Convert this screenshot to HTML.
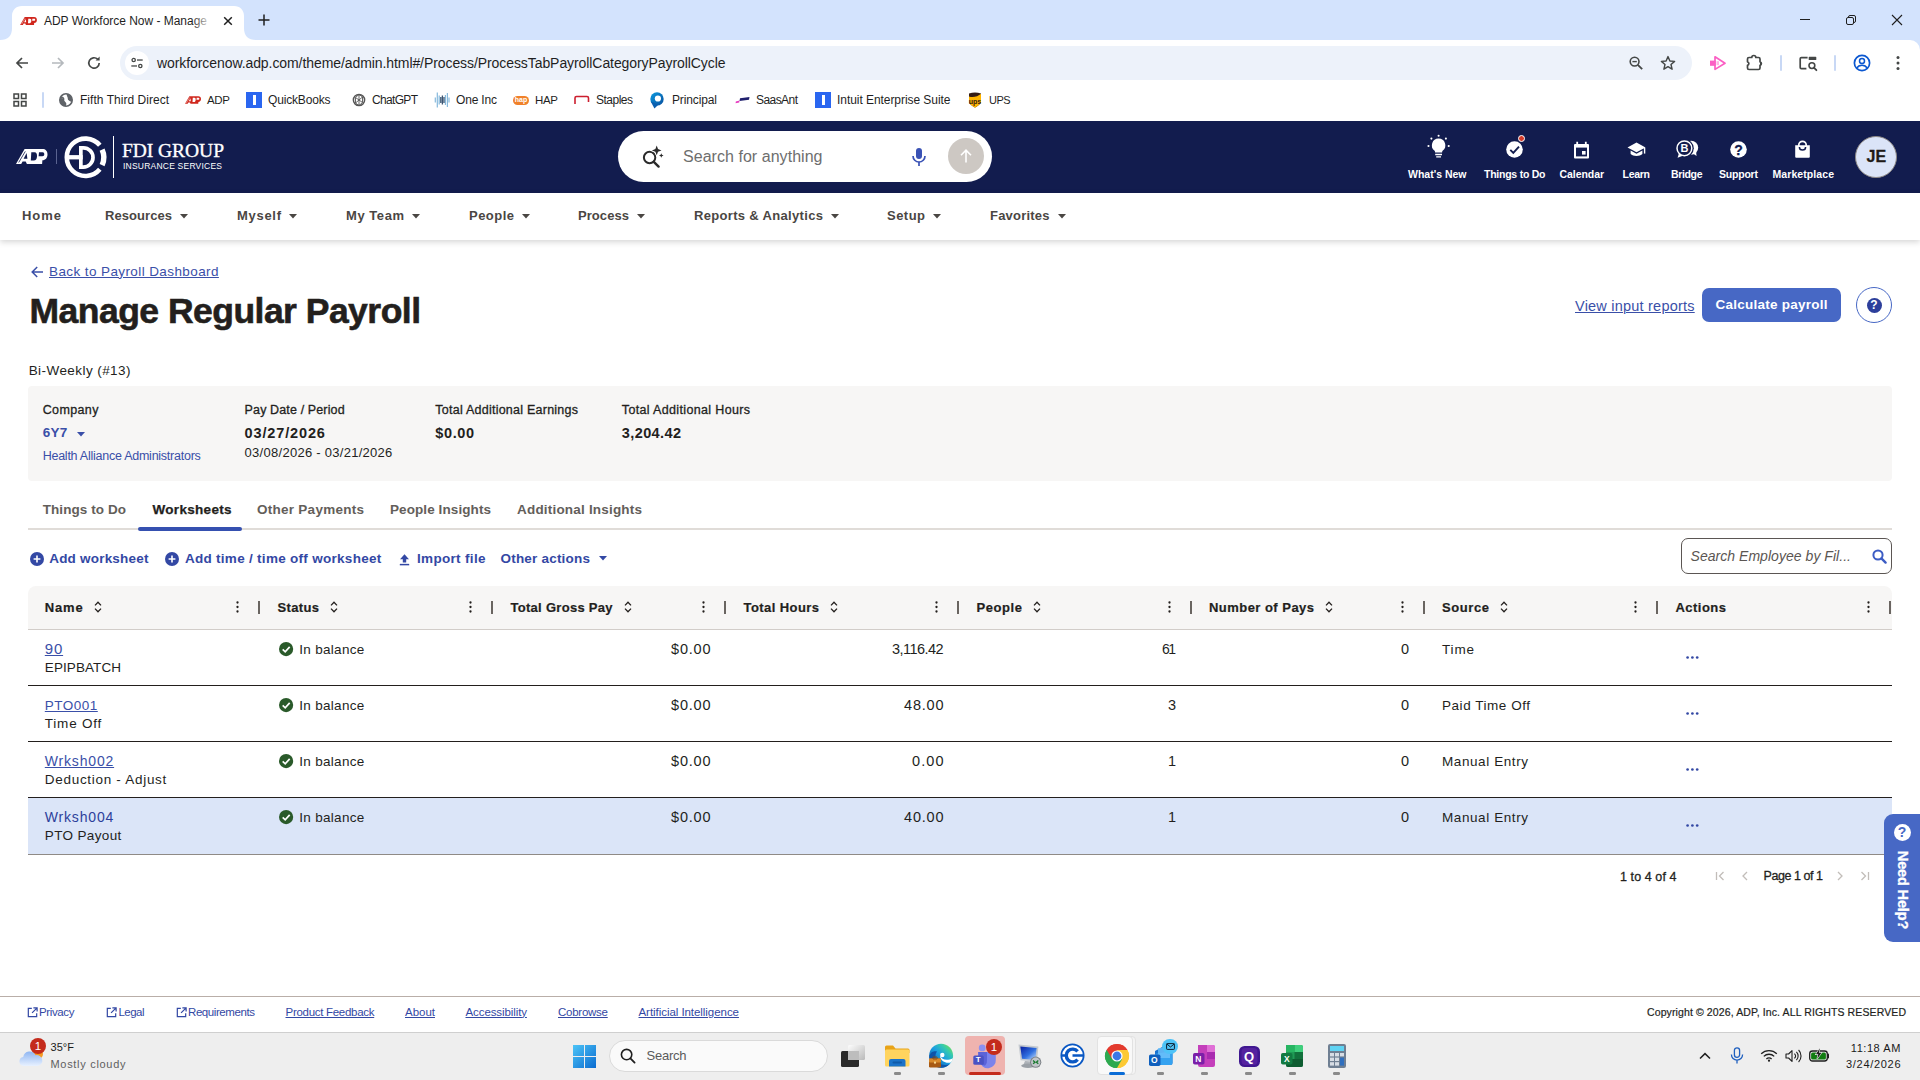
<!DOCTYPE html>
<html lang="en">
<head>
<meta charset="utf-8">
<title>ADP Workforce Now - Manage Regular Payroll</title>
<style>
html,body{margin:0;padding:0;background:#fff;}
body{width:1920px;height:1080px;overflow:hidden;font-family:"Liberation Sans",sans-serif;}
#root{position:relative;width:1920px;height:1080px;overflow:hidden;background:#fff;}
.t{position:absolute;white-space:nowrap;margin:0;padding:0;}
.u span{text-decoration:underline;text-decoration-thickness:1px;text-underline-offset:2px;}
svg{display:block;overflow:visible;}
</style>
</head>
<body>
<div id="root">
<div style="position:absolute;left:0px;top:0px;width:1920px;height:56px;background:#d3e3fd;"></div>
<svg style="position:absolute;left:0;top:0" width="260" height="41" viewBox="0 0 260 41"><path d="M0 40 C8 40 12 36 12 28 L12 16 C12 10 16 6 22 6 L234 6 C240 6 244 10 244 16 L244 28 C244 36 248 40 256 40 L256 41 L0 41 Z" fill="#fff"/></svg>
<div style="position:absolute;left:0px;top:40px;width:1920px;height:46px;background:#fff;border-radius:0 10px 0 0;"></div>
<div style="position:absolute;left:0px;top:86px;width:1920px;height:35px;background:#fff;"></div>
<svg style="position:absolute;left:20px;top:17px;" width="17" height="8" viewBox="0 0 31.5 15"><path d="M0 14.9 L8.6 0 L26.4 0 C29.6 0 31.5 2 31.5 5.4 C31.5 8.8 29.4 11.2 26.4 11.2 L26.1 14.9 L10.9 14.9 L9.7 12.4 L6.6 12.4 L5.2 14.9 Z" fill="#d0271d"/><path d="M10.6 3.9 L11.4 9.8 L7.6 9.8 Z M15.3 3.3 H18.5 C20.5 3.3 21.2 5 21 7.4 C20.8 9.8 19.8 11.5 17.8 11.5 H14.8 Z M23 3.2 H26.6 C27.8 3.2 28.3 4 28.3 5.2 C28.3 6.4 27.6 7.2 26.4 7.2 H22.6 Z" fill="#fff"/><path d="M2.7 13.5 L9.3 2.4" stroke="#fff" stroke-width=".8"/></svg>
<span class="t" style="left:44px;top:12.9px;font-size:12px;line-height:17px;font-weight:400;color:#1f1f1f;letter-spacing:-0.025px;"><span>ADP Workforce Now - Manage</span></span>
<div style="position:absolute;left:192px;top:10px;width:20px;height:22px;background:linear-gradient(90deg,rgba(255,255,255,0),#fff);"></div>
<svg style="position:absolute;left:222px;top:15px;" width="12" height="12" viewBox="0 0 12 12"><path d="M2.2 2.2 L9.8 9.8 M9.8 2.2 L2.2 9.8" stroke="#1f1f1f" stroke-width="1.5" fill="none"/></svg>
<svg style="position:absolute;left:257px;top:13px;" width="14" height="14" viewBox="0 0 14 14"><path d="M7 1.5 V12.5 M1.5 7 H12.5" stroke="#1f1f1f" stroke-width="1.5" fill="none"/></svg>
<svg style="position:absolute;left:1799px;top:13px;" width="12" height="12" viewBox="0 0 12 12"><path d="M1 6.5 H11" stroke="#1f1f1f" stroke-width="1" fill="none"/></svg>
<svg style="position:absolute;left:1845px;top:14.3px;" width="12" height="12" viewBox="0 0 12 12"><rect x="1.5" y="3.5" width="7" height="7" rx="1.5" stroke="#1f1f1f" fill="none"/><path d="M3.5 3.5 V3 A1.5 1.5 0 0 1 5 1.5 H9 A1.5 1.5 0 0 1 10.5 3 V7 A1.5 1.5 0 0 1 9 8.5 H8.5" stroke="#1f1f1f" fill="none"/></svg>
<svg style="position:absolute;left:1891px;top:14px;" width="12" height="12" viewBox="0 0 12 12"><path d="M1 1 L11 11 M11 1 L1 11" stroke="#1f1f1f" stroke-width="1.1" fill="none"/></svg>
<svg style="position:absolute;left:14px;top:55px;" width="16" height="16" viewBox="0 0 16 16"><path d="M14 8 H3 M8 3 L3 8 L8 13" stroke="#444746" stroke-width="1.7" fill="none"/></svg>
<svg style="position:absolute;left:50px;top:55px;" width="16" height="16" viewBox="0 0 16 16"><path d="M2 8 H13 M8 3 L13 8 L8 13" stroke="#b5b9bd" stroke-width="1.7" fill="none"/></svg>
<svg style="position:absolute;left:86px;top:55px;" width="16" height="16" viewBox="0 0 16 16"><path d="M13.2 8 A5.2 5.2 0 1 1 11.6 4.2" stroke="#444746" stroke-width="1.7" fill="none"/><path d="M13.6 1.6 V5.6 H9.6 Z" fill="#444746"/></svg>
<div style="position:absolute;left:120px;top:46px;width:1572px;height:34px;background:#edf2fa;border-radius:17px;"></div>
<div style="position:absolute;left:125px;top:51px;width:24px;height:24px;background:#fff;border-radius:12px;"></div>
<svg style="position:absolute;left:130px;top:56px;" width="14" height="14" viewBox="0 0 16 16"><circle cx="4.2" cy="4.6" r="1.9" stroke="#444746" stroke-width="1.5" fill="none"/><path d="M8 4.6 H14.5" stroke="#444746" stroke-width="1.5"/><circle cx="11.8" cy="11.4" r="1.9" stroke="#444746" stroke-width="1.5" fill="none"/><path d="M1.5 11.4 H8" stroke="#444746" stroke-width="1.5"/></svg>
<span class="t" style="left:157px;top:53.3px;font-size:14px;line-height:20px;font-weight:400;color:#1f1f1f;letter-spacing:-0.079px;"><span>workforcenow.adp.com/theme/admin.html#/Process/ProcessTabPayrollCategoryPayrollCycle</span></span>
<svg style="position:absolute;left:1628px;top:55px;" width="16" height="16" viewBox="0 0 16 16"><circle cx="6.6" cy="6.6" r="4.4" stroke="#444746" stroke-width="1.6" fill="none"/><path d="M9.8 9.8 L14.2 14.2" stroke="#444746" stroke-width="1.8"/><path d="M4.4 6.6 H8.8" stroke="#444746" stroke-width="1.4"/></svg>
<svg style="position:absolute;left:1660px;top:55px;" width="16" height="16" viewBox="0 0 16 16"><path d="M8 1.6 L9.9 6 L14.6 6.4 L11 9.5 L12.1 14.2 L8 11.7 L3.9 14.2 L5 9.5 L1.4 6.4 L6.1 6 Z" stroke="#444746" stroke-width="1.4" fill="none" stroke-linejoin="round"/></svg>
<svg style="position:absolute;left:1708px;top:54px;" width="19" height="18" viewBox="0 0 19 18"><path d="M2 6.6 H7.6 V11.8 H2 Z" fill="#fb5fc4"/><path d="M7 2.8 L17 9.2 L7 15.4 Z" fill="none" stroke="#fb5fc4" stroke-width="1.7" stroke-linejoin="round"/><path d="M8.5 7.2 H11 V11.2 H8.5 Z" fill="#fcb6e2"/></svg>
<svg style="position:absolute;left:1745px;top:53px;" width="20" height="20" viewBox="0 0 20 20"><path d="M2.5 6 A1.5 1.5 0 0 1 4 4.5 H6.8 A2 2 0 0 1 10.8 4.5 H13.5 A1.5 1.5 0 0 1 15 6 V8.8 A1.8 1.8 0 0 1 15 12.3 V15 A1.5 1.5 0 0 1 13.5 16.5 H4 A1.5 1.5 0 0 1 2.5 15 V12.3 A1.8 1.8 0 0 0 2.5 8.8 Z" stroke="#444746" stroke-width="1.7" fill="none" stroke-linejoin="round"/><path d="M15 8.8 A1.8 1.8 0 0 1 15 12.3 Z" fill="#444746"/></svg>
<div style="position:absolute;left:1780px;top:55px;width:2px;height:16px;background:#c8d8f5;border-radius:1px;"></div>
<svg style="position:absolute;left:1797px;top:54px;" width="20" height="18" viewBox="0 0 20 18"><path d="M10.6 3.6 H4.4 A1.2 1.2 0 0 0 3.2 4.8 V13.4 A1.2 1.2 0 0 0 4.4 14.6 H9.4" stroke="#444746" stroke-width="1.7" fill="none"/><rect x="11.7" y="2.8" width="7.6" height="3.3" rx=".6" fill="#444746"/><circle cx="14.9" cy="11.6" r="2.9" stroke="#444746" stroke-width="1.6" fill="none"/><path d="M17.1 13.8 L19.4 16.2" stroke="#444746" stroke-width="1.8" stroke-linecap="round"/></svg>
<div style="position:absolute;left:1834px;top:55px;width:2px;height:16px;background:#c8d8f5;border-radius:1px;"></div>
<svg style="position:absolute;left:1853px;top:54px;" width="18" height="18" viewBox="0 0 18 18"><circle cx="9" cy="9" r="7.6" stroke="#0b57d0" stroke-width="1.7" fill="none"/><circle cx="9" cy="7" r="2.5" stroke="#0b57d0" stroke-width="1.5" fill="none"/><path d="M3.8 14.2 C5 11.8 7 11.2 9 11.2 C11 11.2 13 11.8 14.2 14.2" stroke="#0b57d0" stroke-width="1.5" fill="none"/></svg>
<svg style="position:absolute;left:1895px;top:55px;" width="6" height="16" viewBox="0 0 6 16"><circle cx="3" cy="2.5" r="1.5" fill="#444746"/><circle cx="3" cy="8" r="1.5" fill="#444746"/><circle cx="3" cy="13.5" r="1.5" fill="#444746"/></svg>
<svg style="position:absolute;left:13px;top:93px;" width="14" height="14" viewBox="0 0 14 14"><path d="M1 1 H5.5 V5.5 H1 Z M8.5 1 H13 V5.5 H8.5 Z M1 8.5 H5.5 V13 H1 Z M8.5 8.5 H13 V13 H8.5 Z" stroke="#444746" stroke-width="1.5" fill="none"/></svg>
<div style="position:absolute;left:42px;top:92px;width:2px;height:16px;background:#c8d8f5;border-radius:1px;"></div>
<svg style="position:absolute;left:59px;top:93px;" width="14" height="14" viewBox="0 0 14 14"><circle cx="7" cy="7" r="6.2" stroke="#5f6368" stroke-width="1.6" fill="none"/><path d="M2 4.5 C4 4 5 5.5 4.5 7 C4 8.5 6 9 6.5 10.5 C6.8 11.6 6 12.5 6 13 M8.5 1 C8 3 10 3.5 9.5 5.5 C9.2 7 11.5 7 12.8 8.5" stroke="#5f6368" stroke-width="1.6" fill="none"/><path d="M1.2 5 C3.5 4.5 5 6 4.5 7.5 C4.2 8.6 6 9 6.4 10.6 L6 13.2 A6.2 6.2 0 0 1 1.2 5 Z" fill="#5f6368"/><path d="M8.3 .9 C8 3 10 3.6 9.6 5.4 C9.3 6.8 11.5 7 13 8.4 A6.2 6.2 0 0 0 8.3 .9 Z" fill="#5f6368"/></svg>
<span class="t" style="left:80px;top:91.5px;font-size:12px;line-height:17px;font-weight:400;color:#1f1f1f;letter-spacing:0.031px;"><span>Fifth Third Direct</span></span>
<svg style="position:absolute;left:185px;top:96px;" width="16" height="8" viewBox="0 0 31.5 15"><path d="M0 14.9 L8.6 0 L26.4 0 C29.6 0 31.5 2 31.5 5.4 C31.5 8.8 29.4 11.2 26.4 11.2 L26.1 14.9 L10.9 14.9 L9.7 12.4 L6.6 12.4 L5.2 14.9 Z" fill="#d0271d"/><path d="M10.6 3.9 L11.4 9.8 L7.6 9.8 Z M15.3 3.3 H18.5 C20.5 3.3 21.2 5 21 7.4 C20.8 9.8 19.8 11.5 17.8 11.5 H14.8 Z M23 3.2 H26.6 C27.8 3.2 28.3 4 28.3 5.2 C28.3 6.4 27.6 7.2 26.4 7.2 H22.6 Z" fill="#fff"/><path d="M2.7 13.5 L9.3 2.4" stroke="#fff" stroke-width=".8"/></svg>
<span class="t" style="left:207px;top:92.2px;font-size:11.5px;line-height:16px;font-weight:400;color:#1f1f1f;letter-spacing:-0.328px;"><span>ADP</span></span>
<div style="position:absolute;left:246px;top:92px;width:16px;height:16px;background:#2a66f0;"></div>
<div style="position:absolute;left:252.5px;top:95px;width:3px;height:10px;background:#fff;"></div>
<span class="t" style="left:268px;top:91.5px;font-size:12px;line-height:17px;font-weight:400;color:#1f1f1f;letter-spacing:-0.170px;"><span>QuickBooks</span></span>
<svg style="position:absolute;left:352px;top:93px;" width="14" height="14" viewBox="0 0 14 14"><circle cx="7" cy="7" r="5.6" stroke="#555" stroke-width="1.5" fill="none"/><path d="M7 1.4 L10.5 4 V9.5 L7 12.6 L3.5 10 V4.5 Z M3.5 4.5 L10.5 9.5 M10.5 4 L3.5 10 M7 1.4 V12.6" stroke="#555" stroke-width=".9" fill="none"/></svg>
<span class="t" style="left:372px;top:91.5px;font-size:12px;line-height:17px;font-weight:400;color:#1f1f1f;letter-spacing:-0.669px;"><span>ChatGPT</span></span>
<svg style="position:absolute;left:434px;top:92px;" width="16" height="16" viewBox="0 0 16 16"><path d="M1.3 5.5 V10.5 M3.3 .5 V15.5 M5.2 3.5 V12.5 M11.4 3 V13 M13.4 1 V15 M15 5.5 V10.5" stroke="#86b9dc" stroke-width="1.2" fill="none"/><path d="M6.8 5 V11 M8.4 3.5 V12.5 M10 5 V11" stroke="#3b5573" stroke-width="1.3" fill="none"/></svg>
<span class="t" style="left:456px;top:91.5px;font-size:12px;line-height:17px;font-weight:400;color:#1f1f1f;letter-spacing:-0.172px;"><span>One Inc</span></span>
<div style="position:absolute;left:513px;top:95.5px;width:16px;height:9px;background:#f0812a;border-radius:4.5px;"></div>
<span class="t" style="left:221px;width:600px;text-align:center;top:94.8px;font-size:7px;line-height:10px;font-weight:700;color:#fff;"><span>hap</span></span>
<span class="t" style="left:535px;top:92.2px;font-size:11.5px;line-height:16px;font-weight:400;color:#1f1f1f;letter-spacing:-0.328px;"><span>HAP</span></span>
<svg style="position:absolute;left:574px;top:93px;" width="16" height="14" viewBox="0 0 16 14"><path d="M1 11 V5 A1.5 1.5 0 0 1 2.5 3.5 H13 A1.5 1.5 0 0 1 14.5 5 V9" stroke="#cc1f2f" stroke-width="1.6" fill="none"/></svg>
<span class="t" style="left:596px;top:91.5px;font-size:12px;line-height:17px;font-weight:400;color:#1f1f1f;letter-spacing:-0.505px;"><span>Staples</span></span>
<svg style="position:absolute;left:650px;top:91.5px;" width="14" height="17" viewBox="0 0 14 17"><defs><linearGradient id="pr" x1="0" y1="0" x2="1" y2="1"><stop offset="0" stop-color="#0a9be0"/><stop offset="1" stop-color="#0a4f9e"/></linearGradient></defs><circle cx="7" cy="6.9" r="6.7" fill="url(#pr)"/><path d="M.8 9.4 L4.4 16.4 L8.6 12.6 Z" fill="#0a5fb0"/><circle cx="7.9" cy="6.5" r="3.1" fill="#fff"/></svg>
<span class="t" style="left:672px;top:91.5px;font-size:12px;line-height:17px;font-weight:400;color:#1f1f1f;letter-spacing:-0.129px;"><span>Principal</span></span>
<svg style="position:absolute;left:735px;top:96px;" width="16" height="8" viewBox="0 0 16 8"><path d="M5 2.2 L14.5 1 L14 3.8 L4.5 5 Z" fill="#20206e"/><path d="M.8 5.4 L4.6 4.6 L4.2 6.6 L.6 7.2 Z" fill="#e83cc0"/></svg>
<span class="t" style="left:756px;top:91.5px;font-size:12px;line-height:17px;font-weight:400;color:#1f1f1f;letter-spacing:-0.562px;"><span>SaasAnt</span></span>
<div style="position:absolute;left:815px;top:92px;width:16px;height:16px;background:#2a66f0;"></div>
<div style="position:absolute;left:821.5px;top:95px;width:3px;height:10px;background:#fff;"></div>
<span class="t" style="left:837px;top:91.5px;font-size:12px;line-height:17px;font-weight:400;color:#1f1f1f;letter-spacing:-0.056px;"><span>Intuit Enterprise Suite</span></span>
<svg style="position:absolute;left:968px;top:92px;" width="14" height="16" viewBox="0 0 14 16"><path d="M1 1.5 C5 .2 9 .2 13 1.5 V9 C13 12 10 14 7 15.5 C4 14 1 12 1 9 Z" fill="#351c15"/><path d="M1 4.5 C5 6 10 4.5 13 1.8 V9 C13 12 10 14 7 15.5 C4 14 1 12 1 9 Z" fill="#ffb500"/></svg>
<span class="t" style="left:675px;width:600px;text-align:center;top:96.5px;font-size:7px;line-height:10px;font-weight:700;color:#351c15;"><span>ups</span></span>
<span class="t" style="left:989px;top:92.9px;font-size:11px;line-height:15px;font-weight:400;color:#1f1f1f;letter-spacing:-0.562px;"><span>UPS</span></span>
<div style="position:absolute;left:0px;top:121px;width:1920px;height:72px;background:#121c4e;"></div>
<svg style="position:absolute;left:15.7px;top:148.9px;" width="31.5" height="15" viewBox="0 0 31.5 15"><path d="M0 14.9 L8.6 0 L26.4 0 C29.6 0 31.5 2 31.5 5.4 C31.5 8.8 29.4 11.2 26.4 11.2 L26.1 14.9 L10.9 14.9 L9.7 12.4 L6.6 12.4 L5.2 14.9 Z" fill="#fff"/><path d="M10.6 3.9 L11.4 9.8 L7.6 9.8 Z M15.3 3.3 H18.5 C20.5 3.3 21.2 5 21 7.4 C20.8 9.8 19.8 11.5 17.8 11.5 H14.8 Z M23 3.2 H26.6 C27.8 3.2 28.3 4 28.3 5.2 C28.3 6.4 27.6 7.2 26.4 7.2 H22.6 Z" fill="#121c4e"/><path d="M2.7 13.5 L9.3 2.4" stroke="#121c4e" stroke-width=".8"/></svg>
<div style="position:absolute;left:56px;top:149px;width:1px;height:15px;background:#5a6390;"></div>
<svg style="position:absolute;left:64px;top:135.5px;" width="43" height="43" viewBox="0 0 43 43"><path d="M35.82 9.28 A18.7 18.7 0 1 0 35.82 33.32" stroke="#fff" stroke-width="4.6" fill="none"/><path d="M38.09 13.57 A18.3 18.3 0 0 1 38.09 29.03" stroke="#fff" stroke-width="5.4" fill="none"/><path d="M4.8 19.1 H18.7 V23.4 H4.8 Z" fill="#fff"/><path fill-rule="evenodd" d="M15 10 H19.4 A11.45 11.45 0 0 1 19.4 32.9 H15 Z M18.7 13.7 H19.4 A7.75 7.75 0 0 1 19.4 29.2 H18.7 Z" fill="#fff"/></svg>
<div style="position:absolute;left:113px;top:136px;width:1px;height:42px;background:#fff;"></div>
<span class="t" style="left:122px;top:139.0px;font-size:19.5px;line-height:24px;font-weight:400;color:#fff;letter-spacing:-0.051px;font-family:'Liberation Serif', serif;-webkit-text-stroke:.35px #fff;"><span>FDI GROUP</span></span>
<span class="t" style="left:123px;top:161.4px;font-size:8.5px;line-height:10px;font-weight:400;color:#fff;letter-spacing:0.220px;"><span>INSURANCE SERVICES</span></span>
<div style="position:absolute;left:618px;top:131px;width:374px;height:51px;background:#fff;border-radius:25.5px;"></div>
<svg style="position:absolute;left:641px;top:145px;" width="24" height="24" viewBox="0 0 24 24"><circle cx="8.6" cy="12.5" r="5.7" stroke="#2b2b2b" stroke-width="2" fill="none"/><path d="M12.8 16.8 L17.6 21.6" stroke="#2b2b2b" stroke-width="2.4" stroke-linecap="round"/><path d="M15.7 .6 L17 4.1 L20.5 5.4 L17 6.7 L15.7 10.2 L14.4 6.7 L10.9 5.4 L14.4 4.1 Z" fill="#2b2b2b" stroke="#fff" stroke-width="1.6" paint-order="stroke"/><path d="M20.3 8.2 L20.95 9.85 L22.6 10.5 L20.95 11.15 L20.3 12.8 L19.65 11.15 L18 10.5 L19.65 9.85 Z" fill="#2b2b2b"/></svg>
<span class="t" style="left:683px;top:146.0px;font-size:16px;line-height:22px;font-weight:400;color:#6e6e6e;letter-spacing:0.042px;"><span>Search for anything</span></span>
<svg style="position:absolute;left:911px;top:147px;" width="16" height="20" viewBox="0 0 16 20"><rect x="5" y="1" width="6" height="11" rx="3" fill="#3a52b5"/><path d="M2 9 A6 6 0 0 0 14 9" stroke="#3a52b5" stroke-width="1.7" fill="none"/><path d="M8 15 V19" stroke="#3a52b5" stroke-width="1.7"/></svg>
<div style="position:absolute;left:948px;top:138px;width:36px;height:36px;background:#cdc8c3;border-radius:18px;"></div>
<svg style="position:absolute;left:957px;top:147px;" width="18" height="18" viewBox="0 0 18 18"><path d="M9 15.5 V3.5 M4 8.2 L9 3.2 L14 8.2" stroke="#fff" stroke-width="1.6" fill="none"/></svg>
<svg style="position:absolute;left:1426px;top:134px;" width="25" height="26" viewBox="0 0 25 26"><path d="M12.6 4.6 A6.7 6.7 0 0 0 8.6 16.7 C9 17.2 9.1 17.8 9.1 18.6 H16.1 C16.1 17.8 16.2 17.2 16.6 16.7 A6.7 6.7 0 0 0 12.6 4.6 Z" fill="#fff"/><path d="M9.2 19.8 H16 V21.3 H9.2 Z M10.2 22.3 H15 V23.6 H10.2 Z" fill="#fff"/><circle cx="12.6" cy="1.8" r="1.05" fill="#fff"/><circle cx="5.4" cy="4.6" r="1.05" fill="#fff"/><circle cx="19.9" cy="4.6" r="1.05" fill="#fff"/><circle cx="2.5" cy="12" r="1.05" fill="#fff"/><circle cx="22.7" cy="12" r="1.05" fill="#fff"/></svg>
<span class="t" style="left:1408px;top:166.7px;font-size:10.5px;line-height:15px;font-weight:700;color:#fff;letter-spacing:-0.002px;"><span>What&#x27;s New</span></span>
<svg style="position:absolute;left:1506px;top:141px;" width="17" height="17" viewBox="0 0 17 17"><circle cx="8.5" cy="8.5" r="8.3" fill="#fff"/><path d="M4.3 8.8 L7.3 11.8 L13 5.6" stroke="#121c4e" stroke-width="1.9" fill="none"/></svg>
<div style="position:absolute;left:1518px;top:135px;width:7px;height:7px;background:#d43b2a;border-radius:4px;border:1px solid #fff;box-sizing:border-box;"></div>
<span class="t" style="left:1484px;top:166.7px;font-size:10.5px;line-height:15px;font-weight:700;color:#fff;letter-spacing:-0.241px;"><span>Things to Do</span></span>
<svg style="position:absolute;left:1573px;top:141px;" width="17" height="18" viewBox="0 0 17 18"><path d="M2 3 H15 A1 1 0 0 1 16 4 V16.5 A1 1 0 0 1 15 17.5 H2 A1 1 0 0 1 1 16.5 V4 A1 1 0 0 1 2 3 Z" fill="#fff"/><path d="M4.2 .8 V4 M12.8 .8 V4" stroke="#fff" stroke-width="1.8"/><rect x="3" y="6.6" width="11" height="8.8" fill="#121c4e"/><rect x="9" y="10" width="3.6" height="3.6" fill="#fff"/></svg>
<span class="t" style="left:1559.5px;top:166.7px;font-size:10.5px;line-height:15px;font-weight:700;color:#fff;letter-spacing:-0.062px;"><span>Calendar</span></span>
<svg style="position:absolute;left:1627px;top:142px;" width="19" height="16" viewBox="0 0 19 16"><path d="M9.5 .5 L18.5 5.4 L9.5 10.3 L.5 5.4 Z" fill="#fff"/><path d="M3.6 8.6 V12 C6 14.6 13 14.6 15.4 12 V8.6 L9.5 11.8 Z" fill="#fff"/><path d="M17.6 5.8 V11.6" stroke="#fff" stroke-width="1.4"/></svg>
<span class="t" style="left:1622.5px;top:166.7px;font-size:10.5px;line-height:15px;font-weight:700;color:#fff;letter-spacing:-0.273px;"><span>Learn</span></span>
<svg style="position:absolute;left:1675px;top:139px;" width="24" height="20" viewBox="0 0 24 20"><circle cx="16.2" cy="8.8" r="7" fill="#fff"/><path d="M18 14.5 L21.6 17 L21 12.4 Z" fill="#fff"/><circle cx="9.4" cy="9.3" r="9.4" fill="#121c4e"/><circle cx="9.4" cy="9.3" r="7.4" fill="#121c4e" stroke="#fff" stroke-width="1.5"/><path d="M3.9 14.6 L2.6 18.8 L7.8 16.8 Z" fill="#fff"/></svg>
<span class="t" style="left:1384.4px;width:600px;text-align:center;top:142.4px;font-size:11px;line-height:12px;font-weight:700;color:#fff;"><span>B</span></span>
<span class="t" style="left:1671px;top:166.7px;font-size:10.5px;line-height:15px;font-weight:700;color:#fff;letter-spacing:-0.353px;"><span>Bridge</span></span>
<svg style="position:absolute;left:1730px;top:141px;" width="17" height="17" viewBox="0 0 17 17"><circle cx="8.5" cy="8.5" r="8.3" fill="#fff"/></svg>
<span class="t" style="left:1438.6px;width:600px;text-align:center;top:143.0px;font-size:14px;line-height:14px;font-weight:700;color:#121c4e;-webkit-text-stroke:.3px #121c4e;"><span>?</span></span>
<span class="t" style="left:1719px;top:166.7px;font-size:10.5px;line-height:15px;font-weight:700;color:#fff;letter-spacing:-0.208px;"><span>Support</span></span>
<svg style="position:absolute;left:1794px;top:139px;" width="17" height="20" viewBox="0 0 17 20"><path d="M1.2 6.3 H15.8 V17.8 A1 1 0 0 1 14.8 18.8 H2.2 A1 1 0 0 1 1.2 17.8 Z" fill="#fff"/><path d="M4.8 7 V6 A3.7 3.7 0 0 1 12.2 6 V7" stroke="#fff" stroke-width="1.7" fill="none"/><path d="M5.4 8 A3.1 3.1 0 0 0 11.6 8" stroke="#121c4e" stroke-width="1.5" fill="none"/></svg>
<span class="t" style="left:1772.5px;top:166.7px;font-size:10.5px;line-height:15px;font-weight:700;color:#fff;letter-spacing:0.080px;"><span>Marketplace</span></span>
<div style="position:absolute;left:1855px;top:135.5px;width:42px;height:42px;background:#dbe4f8;border-radius:21px;border:1.5px solid #8f8a86;box-sizing:border-box;"></div>
<span class="t" style="left:1576.5px;width:600px;text-align:center;top:145.7px;font-size:16px;line-height:22px;font-weight:700;color:#1f1a17;letter-spacing:.3px;-webkit-text-stroke:.3px #1f1a17;"><span>JE</span></span>
<div style="position:absolute;left:0px;top:193px;width:1920px;height:47px;background:#fff;box-shadow:0 2px 6px rgba(0,0,0,.17);"></div>
<span class="t" style="left:22px;top:207.2px;font-size:13px;line-height:18px;font-weight:700;color:#4a4643;letter-spacing:0.958px;"><span>Home</span></span>
<span class="t" style="left:105px;top:207.2px;font-size:13px;line-height:18px;font-weight:700;color:#4a4643;letter-spacing:0.064px;"><span>Resources</span></span>
<svg style="position:absolute;left:180px;top:214px;" width="8" height="5" viewBox="0 0 8 5"><path d="M0 0 H8 L4 4.6 Z" fill="#4a4643"/></svg>
<span class="t" style="left:237px;top:207.2px;font-size:13px;line-height:18px;font-weight:700;color:#4a4643;letter-spacing:0.706px;"><span>Myself</span></span>
<svg style="position:absolute;left:289px;top:214px;" width="8" height="5" viewBox="0 0 8 5"><path d="M0 0 H8 L4 4.6 Z" fill="#4a4643"/></svg>
<span class="t" style="left:346px;top:207.2px;font-size:13px;line-height:18px;font-weight:700;color:#4a4643;letter-spacing:0.555px;"><span>My Team</span></span>
<svg style="position:absolute;left:412px;top:214px;" width="8" height="5" viewBox="0 0 8 5"><path d="M0 0 H8 L4 4.6 Z" fill="#4a4643"/></svg>
<span class="t" style="left:469px;top:207.2px;font-size:13px;line-height:18px;font-weight:700;color:#4a4643;letter-spacing:0.475px;"><span>People</span></span>
<svg style="position:absolute;left:522px;top:214px;" width="8" height="5" viewBox="0 0 8 5"><path d="M0 0 H8 L4 4.6 Z" fill="#4a4643"/></svg>
<span class="t" style="left:578px;top:207.2px;font-size:13px;line-height:18px;font-weight:700;color:#4a4643;letter-spacing:0.068px;"><span>Process</span></span>
<svg style="position:absolute;left:637px;top:214px;" width="8" height="5" viewBox="0 0 8 5"><path d="M0 0 H8 L4 4.6 Z" fill="#4a4643"/></svg>
<span class="t" style="left:694px;top:207.2px;font-size:13px;line-height:18px;font-weight:700;color:#4a4643;letter-spacing:0.330px;"><span>Reports &amp; Analytics</span></span>
<svg style="position:absolute;left:831px;top:214px;" width="8" height="5" viewBox="0 0 8 5"><path d="M0 0 H8 L4 4.6 Z" fill="#4a4643"/></svg>
<span class="t" style="left:887px;top:207.2px;font-size:13px;line-height:18px;font-weight:700;color:#4a4643;letter-spacing:0.469px;"><span>Setup</span></span>
<svg style="position:absolute;left:933px;top:214px;" width="8" height="5" viewBox="0 0 8 5"><path d="M0 0 H8 L4 4.6 Z" fill="#4a4643"/></svg>
<span class="t" style="left:990px;top:207.2px;font-size:13px;line-height:18px;font-weight:700;color:#4a4643;letter-spacing:0.211px;"><span>Favorites</span></span>
<svg style="position:absolute;left:1057.5px;top:214px;" width="8" height="5" viewBox="0 0 8 5"><path d="M0 0 H8 L4 4.6 Z" fill="#4a4643"/></svg>
<svg style="position:absolute;left:30.5px;top:265.5px;" width="12" height="12" viewBox="0 0 12 12"><path d="M12 6 H1.6 M6.2 1 L1.2 6 L6.2 11" stroke="#3a4fa8" stroke-width="1.5" fill="none"/></svg>
<span class="t" style="left:49px;top:262.0px;font-size:13.5px;line-height:19px;font-weight:400;color:#3a4fa8;letter-spacing:0.402px;text-decoration:underline;text-decoration-thickness:1px;text-underline-offset:1px;"><span>Back to Payroll Dashboard</span></span>
<span class="t" style="left:29.5px;top:289.2px;font-size:35.5px;line-height:44px;font-weight:700;color:#231f1d;letter-spacing:-0.522px;-webkit-text-stroke:.6px #231f1d;"><span>Manage Regular Payroll</span></span>
<span class="t" style="left:28.7px;top:360.7px;font-size:13.5px;line-height:19px;font-weight:400;color:#231f1d;letter-spacing:0.430px;"><span>Bi-Weekly (#13)</span></span>
<span class="t" style="left:1575px;top:295.6px;font-size:14.5px;line-height:20px;font-weight:400;color:#3a4fa8;letter-spacing:0.218px;text-decoration:underline;text-decoration-thickness:1px;text-underline-offset:1px;"><span>View input reports</span></span>
<div style="position:absolute;left:1702px;top:288px;width:139px;height:34px;background:#4768c5;border-radius:7px;"></div>
<span class="t" style="left:1715.5px;top:295.2px;font-size:13.5px;line-height:19px;font-weight:700;color:#fff;letter-spacing:0.247px;"><span>Calculate payroll</span></span>
<div style="position:absolute;left:1856px;top:287px;width:36px;height:36px;background:#fff;border-radius:18px;border:1px solid #4768c5;box-sizing:border-box;"></div>
<div style="position:absolute;left:1866.5px;top:297.5px;width:15px;height:15px;background:#2d3f9b;border-radius:8px;"></div>
<span class="t" style="left:1574px;width:600px;text-align:center;top:299.2px;font-size:12px;line-height:12px;font-weight:700;color:#fff;"><span>?</span></span>
<div style="position:absolute;left:28px;top:386px;width:1864px;height:95px;background:#f7f6f5;border-radius:4px;"></div>
<span class="t" style="left:42.7px;top:400.8px;font-size:12.5px;line-height:18px;font-weight:400;color:#231f1d;letter-spacing:0.367px;-webkit-text-stroke:.3px currentColor;"><span>Company</span></span>
<span class="t" style="left:42.7px;top:423.3px;font-size:13.5px;line-height:19px;font-weight:700;color:#3a4fa8;letter-spacing:0.334px;"><span>6Y7</span></span>
<svg style="position:absolute;left:76.5px;top:431.5px;" width="8" height="5" viewBox="0 0 8 5"><path d="M0 0 H8 L4 4.6 Z" fill="#3a4fa8"/></svg>
<span class="t" style="left:42.7px;top:446.7px;font-size:12.5px;line-height:18px;font-weight:400;color:#3a4fa8;letter-spacing:-0.250px;"><span>Health Alliance Administrators</span></span>
<span class="t" style="left:244.6px;top:400.8px;font-size:12.5px;line-height:18px;font-weight:400;color:#231f1d;letter-spacing:0.127px;-webkit-text-stroke:.3px currentColor;"><span>Pay Date / Period</span></span>
<span class="t" style="left:244.6px;top:422.5px;font-size:14.5px;line-height:20px;font-weight:700;color:#231f1d;letter-spacing:0.858px;"><span>03/27/2026</span></span>
<span class="t" style="left:244.6px;top:444.3px;font-size:13px;line-height:18px;font-weight:400;color:#231f1d;letter-spacing:0.273px;"><span>03/08/2026 - 03/21/2026</span></span>
<span class="t" style="left:435.3px;top:400.8px;font-size:12.5px;line-height:18px;font-weight:400;color:#231f1d;letter-spacing:0.241px;-webkit-text-stroke:.3px currentColor;"><span>Total Additional Earnings</span></span>
<span class="t" style="left:435.3px;top:422.5px;font-size:14.5px;line-height:20px;font-weight:700;color:#231f1d;letter-spacing:0.601px;"><span>$0.00</span></span>
<span class="t" style="left:621.8px;top:400.8px;font-size:12.5px;line-height:18px;font-weight:400;color:#231f1d;letter-spacing:0.347px;-webkit-text-stroke:.3px currentColor;"><span>Total Additional Hours</span></span>
<span class="t" style="left:621.8px;top:422.5px;font-size:14.5px;line-height:20px;font-weight:700;color:#231f1d;letter-spacing:0.392px;"><span>3,204.42</span></span>
<div style="position:absolute;left:28px;top:528px;width:1864px;height:1.6px;background:#e0dcd8;"></div>
<span class="t" style="left:42.7px;top:500.1px;font-size:13.5px;line-height:19px;font-weight:700;color:#635e5a;letter-spacing:0.074px;"><span>Things to Do</span></span>
<span class="t" style="left:152.5px;top:500.1px;font-size:13.5px;line-height:19px;font-weight:700;color:#231f1d;letter-spacing:0.302px;-webkit-text-stroke:.25px #231f1d;"><span>Worksheets</span></span>
<span class="t" style="left:257px;top:500.1px;font-size:13.5px;line-height:19px;font-weight:700;color:#635e5a;letter-spacing:0.266px;"><span>Other Payments</span></span>
<span class="t" style="left:390px;top:500.1px;font-size:13.5px;line-height:19px;font-weight:700;color:#635e5a;letter-spacing:0.087px;"><span>People Insights</span></span>
<span class="t" style="left:517px;top:500.1px;font-size:13.5px;line-height:19px;font-weight:700;color:#635e5a;letter-spacing:0.194px;"><span>Additional Insights</span></span>
<div style="position:absolute;left:138px;top:527.3px;width:104px;height:3.8px;background:#3550b0;border-radius:2px;"></div>
<svg style="position:absolute;left:29.7px;top:551.7px;" width="14" height="14" viewBox="0 0 14 14"><circle cx="7" cy="7" r="7" fill="#3348a4"/><path d="M7 3.6 V10.4 M3.6 7 H10.4" stroke="#fff" stroke-width="1.6"/></svg>
<span class="t" style="left:49.2px;top:549.1px;font-size:13.5px;line-height:19px;font-weight:700;color:#3348a4;letter-spacing:0.210px;"><span>Add worksheet</span></span>
<svg style="position:absolute;left:164.8px;top:551.7px;" width="14" height="14" viewBox="0 0 14 14"><circle cx="7" cy="7" r="7" fill="#3348a4"/><path d="M7 3.6 V10.4 M3.6 7 H10.4" stroke="#fff" stroke-width="1.6"/></svg>
<span class="t" style="left:184.9px;top:549.1px;font-size:13.5px;line-height:19px;font-weight:700;color:#3348a4;letter-spacing:0.290px;"><span>Add time / time off worksheet</span></span>
<svg style="position:absolute;left:398.8px;top:553.8px;" width="11" height="11.5" viewBox="0 0 11 11.5"><path d="M5.5 .2 L10 5.2 H7.2 V8.4 H3.8 V5.2 H1 Z" fill="#3348a4"/><path d="M.8 10.6 H10.2" stroke="#3348a4" stroke-width="1.5"/></svg>
<span class="t" style="left:417px;top:549.1px;font-size:13.5px;line-height:19px;font-weight:700;color:#3348a4;letter-spacing:0.323px;"><span>Import file</span></span>
<span class="t" style="left:500.5px;top:549.1px;font-size:13.5px;line-height:19px;font-weight:700;color:#3348a4;letter-spacing:0.206px;"><span>Other actions</span></span>
<svg style="position:absolute;left:598.5px;top:556.4px;" width="8" height="5" viewBox="0 0 8 5"><path d="M0 0 H8 L4 4.6 Z" fill="#3348a4"/></svg>
<div style="position:absolute;left:1681px;top:538px;width:211px;height:36px;background:#fff;border-radius:7px;border:1px solid #5b5653;box-sizing:border-box;"></div>
<span class="t" style="left:1690.5px;top:546.1px;font-size:14px;line-height:20px;font-weight:400;color:#5b5653;letter-spacing:0.041px;font-style:italic;"><span>Search Employee by Fil...</span></span>
<svg style="position:absolute;left:1872px;top:549px;" width="15" height="15" viewBox="0 0 15 15"><circle cx="6" cy="6" r="4.6" stroke="#3c5cc4" stroke-width="2" fill="none"/><path d="M9.4 9.4 L13.6 13.6" stroke="#3c5cc4" stroke-width="2.4" stroke-linecap="round"/></svg>
<div style="position:absolute;left:28px;top:586px;width:1864px;height:43px;background:#f7f6f5;border-radius:8px 8px 0 0;"></div>
<div style="position:absolute;left:28px;top:629px;width:1864px;height:1px;background:#d2cdc9;"></div>
<span class="t" style="left:44.8px;top:598.9px;font-size:13px;line-height:18px;font-weight:700;color:#231f1d;letter-spacing:0.826px;-webkit-text-stroke:.2px #231f1d;"><span>Name</span></span>
<svg style="position:absolute;left:93.7px;top:601.2px;" width="8" height="12" viewBox="0 0 8 12"><path d="M1 4.4 L4 1.3 L7 4.4 M1 7.6 L4 10.7 L7 7.6" stroke="#231f1d" stroke-width="1.3" fill="none"/></svg>
<svg style="position:absolute;left:236.1px;top:601.2px;" width="3" height="12" viewBox="0 0 3 12"><circle cx="1.5" cy="1.5" r="1.15" fill="#231f1d"/><circle cx="1.5" cy="6" r="1.15" fill="#231f1d"/><circle cx="1.5" cy="10.5" r="1.15" fill="#231f1d"/></svg>
<div style="position:absolute;left:258px;top:601.4px;width:1.7px;height:12.2px;background:#6a6561;"></div>
<span class="t" style="left:277.5px;top:598.9px;font-size:13px;line-height:18px;font-weight:700;color:#231f1d;letter-spacing:0.353px;-webkit-text-stroke:.2px #231f1d;"><span>Status</span></span>
<svg style="position:absolute;left:330px;top:601.2px;" width="8" height="12" viewBox="0 0 8 12"><path d="M1 4.4 L4 1.3 L7 4.4 M1 7.6 L4 10.7 L7 7.6" stroke="#231f1d" stroke-width="1.3" fill="none"/></svg>
<svg style="position:absolute;left:469.1px;top:601.2px;" width="3" height="12" viewBox="0 0 3 12"><circle cx="1.5" cy="1.5" r="1.15" fill="#231f1d"/><circle cx="1.5" cy="6" r="1.15" fill="#231f1d"/><circle cx="1.5" cy="10.5" r="1.15" fill="#231f1d"/></svg>
<div style="position:absolute;left:491px;top:601.4px;width:1.7px;height:12.2px;background:#6a6561;"></div>
<span class="t" style="left:510.5px;top:598.9px;font-size:13px;line-height:18px;font-weight:700;color:#231f1d;letter-spacing:0.285px;-webkit-text-stroke:.2px #231f1d;"><span>Total Gross Pay</span></span>
<svg style="position:absolute;left:623.5px;top:601.2px;" width="8" height="12" viewBox="0 0 8 12"><path d="M1 4.4 L4 1.3 L7 4.4 M1 7.6 L4 10.7 L7 7.6" stroke="#231f1d" stroke-width="1.3" fill="none"/></svg>
<svg style="position:absolute;left:702.1px;top:601.2px;" width="3" height="12" viewBox="0 0 3 12"><circle cx="1.5" cy="1.5" r="1.15" fill="#231f1d"/><circle cx="1.5" cy="6" r="1.15" fill="#231f1d"/><circle cx="1.5" cy="10.5" r="1.15" fill="#231f1d"/></svg>
<div style="position:absolute;left:724px;top:601.4px;width:1.7px;height:12.2px;background:#6a6561;"></div>
<span class="t" style="left:743.5px;top:598.9px;font-size:13px;line-height:18px;font-weight:700;color:#231f1d;letter-spacing:0.423px;-webkit-text-stroke:.2px #231f1d;"><span>Total Hours</span></span>
<svg style="position:absolute;left:830px;top:601.2px;" width="8" height="12" viewBox="0 0 8 12"><path d="M1 4.4 L4 1.3 L7 4.4 M1 7.6 L4 10.7 L7 7.6" stroke="#231f1d" stroke-width="1.3" fill="none"/></svg>
<svg style="position:absolute;left:935.1px;top:601.2px;" width="3" height="12" viewBox="0 0 3 12"><circle cx="1.5" cy="1.5" r="1.15" fill="#231f1d"/><circle cx="1.5" cy="6" r="1.15" fill="#231f1d"/><circle cx="1.5" cy="10.5" r="1.15" fill="#231f1d"/></svg>
<div style="position:absolute;left:957px;top:601.4px;width:1.7px;height:12.2px;background:#6a6561;"></div>
<span class="t" style="left:976.5px;top:598.9px;font-size:13px;line-height:18px;font-weight:700;color:#231f1d;letter-spacing:0.575px;-webkit-text-stroke:.2px #231f1d;"><span>People</span></span>
<svg style="position:absolute;left:1033px;top:601.2px;" width="8" height="12" viewBox="0 0 8 12"><path d="M1 4.4 L4 1.3 L7 4.4 M1 7.6 L4 10.7 L7 7.6" stroke="#231f1d" stroke-width="1.3" fill="none"/></svg>
<svg style="position:absolute;left:1168.1px;top:601.2px;" width="3" height="12" viewBox="0 0 3 12"><circle cx="1.5" cy="1.5" r="1.15" fill="#231f1d"/><circle cx="1.5" cy="6" r="1.15" fill="#231f1d"/><circle cx="1.5" cy="10.5" r="1.15" fill="#231f1d"/></svg>
<div style="position:absolute;left:1190px;top:601.4px;width:1.7px;height:12.2px;background:#6a6561;"></div>
<span class="t" style="left:1209px;top:598.9px;font-size:13px;line-height:18px;font-weight:700;color:#231f1d;letter-spacing:0.463px;-webkit-text-stroke:.2px #231f1d;"><span>Number of Pays</span></span>
<svg style="position:absolute;left:1325px;top:601.2px;" width="8" height="12" viewBox="0 0 8 12"><path d="M1 4.4 L4 1.3 L7 4.4 M1 7.6 L4 10.7 L7 7.6" stroke="#231f1d" stroke-width="1.3" fill="none"/></svg>
<svg style="position:absolute;left:1401.1px;top:601.2px;" width="3" height="12" viewBox="0 0 3 12"><circle cx="1.5" cy="1.5" r="1.15" fill="#231f1d"/><circle cx="1.5" cy="6" r="1.15" fill="#231f1d"/><circle cx="1.5" cy="10.5" r="1.15" fill="#231f1d"/></svg>
<div style="position:absolute;left:1423px;top:601.4px;width:1.7px;height:12.2px;background:#6a6561;"></div>
<span class="t" style="left:1442px;top:598.9px;font-size:13px;line-height:18px;font-weight:700;color:#231f1d;letter-spacing:0.584px;-webkit-text-stroke:.2px #231f1d;"><span>Source</span></span>
<svg style="position:absolute;left:1500px;top:601.2px;" width="8" height="12" viewBox="0 0 8 12"><path d="M1 4.4 L4 1.3 L7 4.4 M1 7.6 L4 10.7 L7 7.6" stroke="#231f1d" stroke-width="1.3" fill="none"/></svg>
<svg style="position:absolute;left:1634.1px;top:601.2px;" width="3" height="12" viewBox="0 0 3 12"><circle cx="1.5" cy="1.5" r="1.15" fill="#231f1d"/><circle cx="1.5" cy="6" r="1.15" fill="#231f1d"/><circle cx="1.5" cy="10.5" r="1.15" fill="#231f1d"/></svg>
<div style="position:absolute;left:1656px;top:601.4px;width:1.7px;height:12.2px;background:#6a6561;"></div>
<span class="t" style="left:1675.5px;top:598.9px;font-size:13px;line-height:18px;font-weight:700;color:#231f1d;letter-spacing:0.471px;-webkit-text-stroke:.2px #231f1d;"><span>Actions</span></span>
<svg style="position:absolute;left:1867.1px;top:601.2px;" width="3" height="12" viewBox="0 0 3 12"><circle cx="1.5" cy="1.5" r="1.15" fill="#231f1d"/><circle cx="1.5" cy="6" r="1.15" fill="#231f1d"/><circle cx="1.5" cy="10.5" r="1.15" fill="#231f1d"/></svg>
<div style="position:absolute;left:1889px;top:601.4px;width:1.7px;height:12.2px;background:#6a6561;"></div>
<div style="position:absolute;left:28px;top:685px;width:1864px;height:1px;background:#231f1d;"></div>
<span class="t" style="left:44.8px;top:638.2px;font-size:15px;line-height:21px;font-weight:400;color:#3a4fa8;letter-spacing:0.812px;text-decoration:underline;text-decoration-thickness:1px;text-underline-offset:1px;"><span>90</span></span>
<span class="t" style="left:44.8px;top:657.6px;font-size:13.5px;line-height:19px;font-weight:400;color:#231f1d;letter-spacing:0.086px;"><span>EPIPBATCH</span></span>
<svg style="position:absolute;left:278.5px;top:641.5px;" width="14.2" height="14.2" viewBox="0 0 14.2 14.2"><circle cx="7.1" cy="7.1" r="7.1" fill="#2a5a2a"/><path d="M3.7 7.4 L6.2 9.8 L10.7 4.9" stroke="#fff" stroke-width="1.7" fill="none"/></svg>
<span class="t" style="left:299.3px;top:639.7px;font-size:13.5px;line-height:19px;font-weight:400;color:#231f1d;letter-spacing:0.299px;"><span>In balance</span></span>
<span class="t" style="right:1208.69921875px;top:638.9px;font-size:14.5px;line-height:20px;font-weight:400;color:#231f1d;letter-spacing:0.801px;"><span>$0.00</span></span>
<span class="t" style="right:977.0535714285714px;top:638.9px;font-size:14.5px;line-height:20px;font-weight:400;color:#231f1d;letter-spacing:-0.554px;"><span>3,116.42</span></span>
<span class="t" style="right:745.578125px;top:639.0px;font-size:14px;line-height:20px;font-weight:400;color:#231f1d;letter-spacing:-1.578px;"><span>61</span></span>
<span class="t" style="right:511px;top:638.9px;font-size:14.5px;line-height:20px;font-weight:400;color:#231f1d;"><span>0</span></span>
<span class="t" style="left:1442px;top:639.7px;font-size:13.5px;line-height:19px;font-weight:400;color:#231f1d;letter-spacing:0.833px;"><span>Time</span></span>
<svg style="position:absolute;left:1686px;top:656px;" width="13" height="3" viewBox="0 0 13 3"><circle cx="1.6" cy="1.5" r="1.35" fill="#3348a4"/><circle cx="6.4" cy="1.5" r="1.35" fill="#3348a4"/><circle cx="11.2" cy="1.5" r="1.35" fill="#3348a4"/></svg>
<div style="position:absolute;left:28px;top:741px;width:1864px;height:1px;background:#231f1d;"></div>
<span class="t" style="left:44.8px;top:695.7px;font-size:13.5px;line-height:19px;font-weight:400;color:#3a4fa8;letter-spacing:0.491px;text-decoration:underline;text-decoration-thickness:1px;text-underline-offset:1px;"><span>PTO001</span></span>
<span class="t" style="left:44.8px;top:713.6px;font-size:13.5px;line-height:19px;font-weight:400;color:#231f1d;letter-spacing:0.783px;"><span>Time Off</span></span>
<svg style="position:absolute;left:278.5px;top:697.5px;" width="14.2" height="14.2" viewBox="0 0 14.2 14.2"><circle cx="7.1" cy="7.1" r="7.1" fill="#2a5a2a"/><path d="M3.7 7.4 L6.2 9.8 L10.7 4.9" stroke="#fff" stroke-width="1.7" fill="none"/></svg>
<span class="t" style="left:299.3px;top:695.7px;font-size:13.5px;line-height:19px;font-weight:400;color:#231f1d;letter-spacing:0.299px;"><span>In balance</span></span>
<span class="t" style="right:1208.69921875px;top:694.9px;font-size:14.5px;line-height:20px;font-weight:400;color:#231f1d;letter-spacing:0.801px;"><span>$0.00</span></span>
<span class="t" style="right:975.69921875px;top:694.9px;font-size:14.5px;line-height:20px;font-weight:400;color:#231f1d;letter-spacing:0.801px;"><span>48.00</span></span>
<span class="t" style="right:744px;top:694.9px;font-size:14.5px;line-height:20px;font-weight:400;color:#231f1d;"><span>3</span></span>
<span class="t" style="right:511px;top:694.9px;font-size:14.5px;line-height:20px;font-weight:400;color:#231f1d;"><span>0</span></span>
<span class="t" style="left:1442px;top:695.7px;font-size:13.5px;line-height:19px;font-weight:400;color:#231f1d;letter-spacing:0.538px;"><span>Paid Time Off</span></span>
<svg style="position:absolute;left:1686px;top:712px;" width="13" height="3" viewBox="0 0 13 3"><circle cx="1.6" cy="1.5" r="1.35" fill="#3348a4"/><circle cx="6.4" cy="1.5" r="1.35" fill="#3348a4"/><circle cx="11.2" cy="1.5" r="1.35" fill="#3348a4"/></svg>
<div style="position:absolute;left:28px;top:797px;width:1864px;height:1px;background:#231f1d;"></div>
<span class="t" style="left:44.8px;top:751.0px;font-size:14px;line-height:20px;font-weight:400;color:#3a4fa8;letter-spacing:0.817px;text-decoration:underline;text-decoration-thickness:1px;text-underline-offset:1px;"><span>Wrksh002</span></span>
<span class="t" style="left:44.8px;top:769.6px;font-size:13.5px;line-height:19px;font-weight:400;color:#231f1d;letter-spacing:0.702px;"><span>Deduction - Adjust</span></span>
<svg style="position:absolute;left:278.5px;top:753.5px;" width="14.2" height="14.2" viewBox="0 0 14.2 14.2"><circle cx="7.1" cy="7.1" r="7.1" fill="#2a5a2a"/><path d="M3.7 7.4 L6.2 9.8 L10.7 4.9" stroke="#fff" stroke-width="1.7" fill="none"/></svg>
<span class="t" style="left:299.3px;top:751.7px;font-size:13.5px;line-height:19px;font-weight:400;color:#231f1d;letter-spacing:0.299px;"><span>In balance</span></span>
<span class="t" style="right:1208.69921875px;top:750.9px;font-size:14.5px;line-height:20px;font-weight:400;color:#231f1d;letter-spacing:0.801px;"><span>$0.00</span></span>
<span class="t" style="right:975.4114583333334px;top:750.9px;font-size:14.5px;line-height:20px;font-weight:400;color:#231f1d;letter-spacing:1.089px;"><span>0.00</span></span>
<span class="t" style="right:744px;top:750.9px;font-size:14.5px;line-height:20px;font-weight:400;color:#231f1d;"><span>1</span></span>
<span class="t" style="right:511px;top:750.9px;font-size:14.5px;line-height:20px;font-weight:400;color:#231f1d;"><span>0</span></span>
<span class="t" style="left:1442px;top:751.7px;font-size:13.5px;line-height:19px;font-weight:400;color:#231f1d;letter-spacing:0.587px;"><span>Manual Entry</span></span>
<svg style="position:absolute;left:1686px;top:768px;" width="13" height="3" viewBox="0 0 13 3"><circle cx="1.6" cy="1.5" r="1.35" fill="#3348a4"/><circle cx="6.4" cy="1.5" r="1.35" fill="#3348a4"/><circle cx="11.2" cy="1.5" r="1.35" fill="#3348a4"/></svg>
<div style="position:absolute;left:28px;top:798px;width:1864px;height:56px;background:#dbe5f8;"></div>
<div style="position:absolute;left:28px;top:854px;width:1864px;height:1px;background:#8f8a86;"></div>
<span class="t" style="left:44.8px;top:807.0px;font-size:14px;line-height:20px;font-weight:400;color:#2d3f9b;letter-spacing:0.817px;"><span>Wrksh004</span></span>
<span class="t" style="left:44.8px;top:825.6px;font-size:13.5px;line-height:19px;font-weight:400;color:#231f1d;letter-spacing:0.356px;"><span>PTO Payout</span></span>
<svg style="position:absolute;left:278.5px;top:809.5px;" width="14.2" height="14.2" viewBox="0 0 14.2 14.2"><circle cx="7.1" cy="7.1" r="7.1" fill="#2a5a2a"/><path d="M3.7 7.4 L6.2 9.8 L10.7 4.9" stroke="#fff" stroke-width="1.7" fill="none"/></svg>
<span class="t" style="left:299.3px;top:807.7px;font-size:13.5px;line-height:19px;font-weight:400;color:#231f1d;letter-spacing:0.299px;"><span>In balance</span></span>
<span class="t" style="right:1208.69921875px;top:806.9px;font-size:14.5px;line-height:20px;font-weight:400;color:#231f1d;letter-spacing:0.801px;"><span>$0.00</span></span>
<span class="t" style="right:975.69921875px;top:806.9px;font-size:14.5px;line-height:20px;font-weight:400;color:#231f1d;letter-spacing:0.801px;"><span>40.00</span></span>
<span class="t" style="right:744px;top:806.9px;font-size:14.5px;line-height:20px;font-weight:400;color:#231f1d;"><span>1</span></span>
<span class="t" style="right:511px;top:806.9px;font-size:14.5px;line-height:20px;font-weight:400;color:#231f1d;"><span>0</span></span>
<span class="t" style="left:1442px;top:807.7px;font-size:13.5px;line-height:19px;font-weight:400;color:#231f1d;letter-spacing:0.587px;"><span>Manual Entry</span></span>
<svg style="position:absolute;left:1686px;top:824px;" width="13" height="3" viewBox="0 0 13 3"><circle cx="1.6" cy="1.5" r="1.35" fill="#3348a4"/><circle cx="6.4" cy="1.5" r="1.35" fill="#3348a4"/><circle cx="11.2" cy="1.5" r="1.35" fill="#3348a4"/></svg>
<span class="t" style="left:1620px;top:867.5px;font-size:12.5px;line-height:18px;font-weight:400;color:#231f1d;letter-spacing:0.089px;-webkit-text-stroke:.3px currentColor;"><span>1 to 4 of 4</span></span>
<svg style="position:absolute;left:1715px;top:871px;" width="10" height="10" viewBox="0 0 10 10"><path d="M1.5 1 V9 M8.5 1 L4.5 5 L8.5 9" stroke="#c2bdb9" stroke-width="1.3" fill="none"/></svg>
<svg style="position:absolute;left:1741px;top:871px;" width="8" height="10" viewBox="0 0 8 10"><path d="M6 1 L2 5 L6 9" stroke="#c2bdb9" stroke-width="1.3" fill="none"/></svg>
<span class="t" style="left:1763.5px;top:866.8px;font-size:12.5px;line-height:18px;font-weight:400;color:#231f1d;letter-spacing:-0.445px;-webkit-text-stroke:.3px currentColor;"><span>Page 1 of 1</span></span>
<svg style="position:absolute;left:1836px;top:871px;" width="8" height="10" viewBox="0 0 8 10"><path d="M2 1 L6 5 L2 9" stroke="#c2bdb9" stroke-width="1.3" fill="none"/></svg>
<svg style="position:absolute;left:1860px;top:871px;" width="10" height="10" viewBox="0 0 10 10"><path d="M8.5 1 V9 M1.5 1 L5.5 5 L1.5 9" stroke="#c2bdb9" stroke-width="1.3" fill="none"/></svg>
<div style="position:absolute;left:1884px;top:814px;width:40px;height:128px;background:#4768c5;border-radius:9px 0 0 9px;"></div>
<div style="position:absolute;left:1893.5px;top:823.5px;width:17px;height:17px;background:#fff;border-radius:9px;"></div>
<span class="t" style="left:1602px;width:600px;text-align:center;top:825.2px;font-size:14px;line-height:14px;font-weight:700;color:#4768c5;"><span>?</span></span>
<span style="position:absolute;white-space:nowrap;left:1902.8px;top:889.5px;font-size:14.5px;-webkit-text-stroke:.3px #fff;line-height:18px;font-weight:700;color:#fff;transform:translate(-50%,-50%) rotate(90deg);letter-spacing:-.15px;"><span>Need Help?</span></span>
<div style="position:absolute;left:0px;top:996px;width:1920px;height:1px;background:#b9aea8;"></div>
<svg style="position:absolute;left:27px;top:1006.5px;" width="11" height="11" viewBox="0 0 10 10"><path d="M4.4 1.2 H1.2 V8.8 H8.8 V5.6" stroke="#3348a4" stroke-width="1.1" fill="none"/><path d="M5.8 .8 H9.2 V4.2 M9 1 L4.6 5.4" stroke="#3348a4" stroke-width="1.1" fill="none"/></svg>
<span class="t" style="left:39px;top:1004.0px;font-size:11.5px;line-height:16px;font-weight:400;color:#3348a4;letter-spacing:-0.367px;"><span>Privacy</span></span>
<svg style="position:absolute;left:106px;top:1006.5px;" width="11" height="11" viewBox="0 0 10 10"><path d="M4.4 1.2 H1.2 V8.8 H8.8 V5.6" stroke="#3348a4" stroke-width="1.1" fill="none"/><path d="M5.8 .8 H9.2 V4.2 M9 1 L4.6 5.4" stroke="#3348a4" stroke-width="1.1" fill="none"/></svg>
<span class="t" style="left:118.5px;top:1004.0px;font-size:11.5px;line-height:16px;font-weight:400;color:#3348a4;letter-spacing:-0.535px;"><span>Legal</span></span>
<svg style="position:absolute;left:176px;top:1006.5px;" width="11" height="11" viewBox="0 0 10 10"><path d="M4.4 1.2 H1.2 V8.8 H8.8 V5.6" stroke="#3348a4" stroke-width="1.1" fill="none"/><path d="M5.8 .8 H9.2 V4.2 M9 1 L4.6 5.4" stroke="#3348a4" stroke-width="1.1" fill="none"/></svg>
<span class="t" style="left:188px;top:1004.0px;font-size:11.5px;line-height:16px;font-weight:400;color:#3348a4;letter-spacing:-0.418px;"><span>Requirements</span></span>
<span class="t" style="left:285.5px;top:1004.0px;font-size:11.5px;line-height:16px;font-weight:400;color:#3348a4;letter-spacing:-0.290px;text-decoration:underline;text-decoration-thickness:1px;text-underline-offset:.5px;"><span>Product Feedback</span></span>
<span class="t" style="left:405px;top:1004.0px;font-size:11.5px;line-height:16px;font-weight:400;color:#3348a4;letter-spacing:-0.016px;text-decoration:underline;text-decoration-thickness:1px;text-underline-offset:.5px;"><span>About</span></span>
<span class="t" style="left:465.5px;top:1004.0px;font-size:11.5px;line-height:16px;font-weight:400;color:#3348a4;letter-spacing:-0.095px;text-decoration:underline;text-decoration-thickness:1px;text-underline-offset:.5px;"><span>Accessibility</span></span>
<span class="t" style="left:558px;top:1004.0px;font-size:11.5px;line-height:16px;font-weight:400;color:#3348a4;letter-spacing:-0.254px;text-decoration:underline;text-decoration-thickness:1px;text-underline-offset:.5px;"><span>Cobrowse</span></span>
<span class="t" style="left:638.5px;top:1004.0px;font-size:11.5px;line-height:16px;font-weight:400;color:#3348a4;letter-spacing:-0.052px;text-decoration:underline;text-decoration-thickness:1px;text-underline-offset:.5px;"><span>Artificial Intelligence</span></span>
<span class="t" style="left:1647px;top:1004.9px;font-size:10.5px;line-height:15px;font-weight:400;color:#231f1d;letter-spacing:0.112px;-webkit-text-stroke:.2px #231f1d;"><span>Copyright © 2026, ADP, Inc. ALL RIGHTS RESERVED</span></span>
<div style="position:absolute;left:0px;top:1032px;width:1920px;height:48px;background:#eeeeee;"></div>
<div style="position:absolute;left:0px;top:1032px;width:1920px;height:1px;background:#cfcfcf;"></div>
<svg style="position:absolute;left:18px;top:1048px;" width="27" height="20" viewBox="0 0 27 20"><defs><linearGradient id="cl" x1="0" y1="0" x2="0" y2="1"><stop offset="0" stop-color="#8fb6f2"/><stop offset="1" stop-color="#e8f1ff"/></linearGradient></defs><circle cx="20" cy="6" r="5" fill="#f59a23"/><path d="M5.5 18 A4.6 4.6 0 0 1 5.2 8.9 A6.6 6.6 0 0 1 17.6 7.2 A5.4 5.4 0 0 1 20 18 Z" fill="url(#cl)"/></svg>
<div style="position:absolute;left:30px;top:1038px;width:16px;height:16px;background:#c42b1c;border-radius:8px;"></div>
<span class="t" style="left:-262px;width:600px;text-align:center;top:1040.2px;font-size:11.5px;line-height:12px;font-weight:400;color:#fff;"><span>1</span></span>
<span class="t" style="left:50.5px;top:1040.3px;font-size:11px;line-height:15px;font-weight:400;color:#1a1a1a;letter-spacing:0.047px;"><span>35°F</span></span>
<span class="t" style="left:50.5px;top:1056.6px;font-size:11px;line-height:15px;font-weight:400;color:#5f5f5f;letter-spacing:0.697px;"><span>Mostly cloudy</span></span>
<svg style="position:absolute;left:573px;top:1045px;" width="23" height="23" viewBox="0 0 23 23"><defs><linearGradient id="wn" x1="0" y1="0" x2="1" y2="1"><stop offset="0" stop-color="#4cc4f7"/><stop offset="1" stop-color="#0a6bd0"/></linearGradient></defs><path d="M0 0 H11 V11 H0 Z M12 0 H23 V11 H12 Z M0 12 H11 V23 H0 Z M12 12 H23 V23 H12 Z" fill="url(#wn)"/></svg>
<div style="position:absolute;left:609px;top:1040px;width:219px;height:32px;background:#fafafa;border-radius:16px;border:1px solid #dadada;box-sizing:border-box;"></div>
<svg style="position:absolute;left:620px;top:1048px;" width="16" height="16" viewBox="0 0 16 16"><circle cx="6.6" cy="6.6" r="5.2" stroke="#1f1f1f" stroke-width="1.6" fill="none"/><path d="M10.4 10.4 L14.6 14.6" stroke="#1f1f1f" stroke-width="1.8" stroke-linecap="round"/></svg>
<span class="t" style="left:646.5px;top:1047.2px;font-size:13px;line-height:18px;font-weight:400;color:#5a5a5a;letter-spacing:-0.241px;"><span>Search</span></span>
<svg style="position:absolute;left:841px;top:1045px;" width="24" height="23" viewBox="0 0 24 23"><defs><linearGradient id="tv" x1="0" y1="0" x2="1" y2="1"><stop offset="0" stop-color="#fdfdfd"/><stop offset="1" stop-color="#b9b9b9"/></linearGradient></defs><rect x="7" y="0" width="17" height="15" rx="1.5" fill="url(#tv)"/><rect x="0" y="6" width="18" height="16" rx="1.5" fill="#2a2a2a"/><rect x="7" y="6" width="11" height="9" fill="#bdbdbd"/></svg>
<svg style="position:absolute;left:885px;top:1045px;" width="25" height="22" viewBox="0 0 25 22"><path d="M0 2 A1.5 1.5 0 0 1 1.5 .5 H8 L10.5 3.5 H23 A1.5 1.5 0 0 1 24.5 5 V8 H0 Z" fill="#e8a317"/><rect x="0" y="4.5" width="24.5" height="17" rx="1.5" fill="#ffd45e"/><path d="M4 21.5 V16 A2 2 0 0 1 6 14 H18.5 A2 2 0 0 1 20.5 16 V21.5 Z" fill="#1a73c9"/><rect x="7.5" y="16.5" width="9.5" height="2" rx="1" fill="#0f5aa8"/></svg>
<div style="position:absolute;left:893.5px;top:1072.3px;width:7px;height:2.4px;background:#8a8a8a;border-radius:1.2px;"></div>
<svg style="position:absolute;left:928px;top:1044px;" width="26" height="24" viewBox="0 0 26 24"><defs><linearGradient id="eg" x1=".1" y1=".9" x2=".9" y2=".1"><stop offset="0" stop-color="#0c59a4"/><stop offset=".5" stop-color="#1b9de2"/><stop offset=".8" stop-color="#35c9b0"/><stop offset="1" stop-color="#6bdc5a"/></linearGradient></defs><circle cx="13.1" cy="11.8" r="12" fill="url(#eg)"/><path d="M1.3 13.5 C1.5 8.5 5.5 6.6 9 7.6 C7 9.8 6.8 14.5 9.5 17.8 C12.5 21.4 17.5 21.6 21.5 20.3 A12 12 0 0 1 1.3 13.5 Z" fill="#0f54a8"/><circle cx="14.3" cy="11" r="2.2" fill="#fff"/><path d="M12.6 12 C13.4 15.4 18.6 17.4 25 14.2 C24.6 15.8 24 17 23.2 18.2 C18.6 20 13 17.4 12.2 13 Z" fill="#fff"/><rect x="1" y="14.6" width="12" height="9" rx="1.3" fill="#a85a14"/><rect x="1" y="14.6" width="12" height="4" rx="1" fill="#d98a2b"/><rect x="4.8" y="13" width="4.4" height="2" rx=".7" fill="none" stroke="#8a4a10" stroke-width=".9"/><rect x="6" y="17.6" width="2" height="2" fill="#f7d58a"/></svg>
<div style="position:absolute;left:937.5px;top:1072.3px;width:7px;height:2.4px;background:#8a8a8a;border-radius:1.2px;"></div>
<div style="position:absolute;left:965px;top:1036px;width:40px;height:39px;background:#efb3af;border-radius:4px;"></div>
<div style="position:absolute;left:969px;top:1072px;width:32px;height:3px;background:#c42b1c;border-radius:1.5px;"></div>
<svg style="position:absolute;left:972.5px;top:1043.5px;" width="23" height="24" viewBox="0 0 23 24"><circle cx="9.2" cy="3.9" r="3.4" fill="#8b91f1"/><path d="M5.2 8 H19.8 A3 3 0 0 1 22.8 11 V15.5 A8 8 0 0 1 6.8 17 Z" fill="#7b83eb"/><path d="M5.2 8 H14 V15.5 A7.5 7.5 0 0 1 12 21.8 A8 8 0 0 1 5.2 15 Z" fill="#5b63d8"/><rect x=".3" y="11.5" width="10.5" height="9.3" rx="1.6" fill="#4a52c4"/></svg>
<span class="t" style="left:678.1px;width:600px;text-align:center;top:1055.3px;font-size:8px;line-height:9px;font-weight:700;color:#fff;"><span>T</span></span>
<div style="position:absolute;left:986px;top:1039px;width:16px;height:16px;background:#c42b1c;border-radius:8px;"></div>
<span class="t" style="left:694px;width:600px;text-align:center;top:1041.2px;font-size:11.5px;line-height:12px;font-weight:400;color:#fff;"><span>1</span></span>
<svg style="position:absolute;left:1018px;top:1044px;" width="24" height="25" viewBox="0 0 24 25"><defs><linearGradient id="rd" x1="0" y1="0" x2="1" y2="1"><stop offset="0" stop-color="#0a1fa0"/><stop offset=".55" stop-color="#2f6fe0"/><stop offset="1" stop-color="#cfe8ff"/></linearGradient></defs><path d="M.5 .6 L20.4 2.4 L18.9 17.8 L2.6 16.2 Z" fill="#c4c9cf"/><path d="M2.3 2.5 L18.6 3.9 L17.4 16 L4 14.7 Z" fill="url(#rd)"/><path d="M7 17 L13.5 17.6 L14.5 21 L5.5 20.4 Z" fill="#aeb3b9"/><ellipse cx="10" cy="21.8" rx="6.8" ry="2.2" fill="#9aa0a6"/><circle cx="17.7" cy="18.2" r="5.6" fill="#7d8287"/><circle cx="17.7" cy="18.2" r="4.6" fill="#c2c6ca"/><path d="M15.1 16.6 L17 18.2 L15.1 19.8 M20.3 16.6 L18.4 18.2 L20.3 19.8" stroke="#1a7a2e" stroke-width="1.3" fill="none"/></svg>
<svg style="position:absolute;left:1060.4px;top:1043.3px;" width="25" height="25" viewBox="0 0 25 25"><circle cx="12.5" cy="12.5" r="11.2" fill="#fff" stroke="#0a58c4" stroke-width="1.7"/><path d="M17.6 8.4 A6.4 6.4 0 1 0 17.6 16.6" stroke="#0a58c4" stroke-width="3.4" fill="none"/><path d="M1.5 12.5 H5 M12.5 12.5 H23.5" stroke="#0a58c4" stroke-width="2.4"/></svg>
<div style="position:absolute;left:1100px;top:1036px;width:36px;height:39px;background:#f4f4f4;border-radius:4px;border:1px solid #e2e2e2;box-sizing:border-box;"></div>
<div style="position:absolute;left:1097px;top:1036px;width:36px;height:39px;background:#f9f9f9;border-radius:4px;border:1px solid #e2e2e2;box-sizing:border-box;"></div>
<div style="position:absolute;left:1109px;top:1072px;width:16px;height:3px;background:#0a6cd6;border-radius:1.5px;"></div>
<svg style="position:absolute;left:1104.5px;top:1043.5px;" width="24" height="24" viewBox="0 0 24 24"><circle cx="12" cy="12" r="12" fill="#fff"/><path d="M12 12 L1.6 6 A12 12 0 0 1 22.4 6 Z" fill="#e33b2e"/><path d="M12 12 L22.4 6 A12 12 0 0 1 12 24 Z" fill="#fcc934"/><path d="M12 12 L12 24 A12 12 0 0 1 1.6 6 Z" fill="#2da94f"/><path d="M12 6 H22.4 A12 12 0 0 0 1.6 6 L6.8 15 Z" fill="#e33b2e"/><path d="M17.2 15 L12 24 A12 12 0 0 0 22.4 6 H12 Z" fill="#fcc934"/><path d="M6.8 15 L1.6 6 A12 12 0 0 0 12 24 L17.2 15 Z" fill="#2da94f"/><circle cx="12" cy="12" r="5.6" fill="#fff"/><circle cx="12" cy="12" r="4.4" fill="#3b78e7"/></svg>
<svg style="position:absolute;left:1148.5px;top:1046px;" width="24" height="22" viewBox="0 0 24 22"><path d="M6 5 L15 0 L23.5 5 V17 A2 2 0 0 1 21.5 19 H8 A2 2 0 0 1 6 17 Z" fill="#1a73d0"/><path d="M6 8 L23.5 5 V17 A2 2 0 0 1 21.5 19 H8 Z" fill="#35a2f0"/><path d="M9 2 H21 V12 H9 Z" fill="#6fc3fb" opacity=".8"/><rect x="0" y="8.5" width="11.5" height="11.5" rx="1.8" fill="#0f5fbd"/></svg>
<span class="t" style="left:854.3px;width:600px;text-align:center;top:1055.9px;font-size:8.5px;line-height:9px;font-weight:700;color:#fff;"><span>O</span></span>
<div style="position:absolute;left:1162px;top:1038.5px;width:15.5px;height:15.5px;background:#4fc3f7;border-radius:8px;"></div>
<svg style="position:absolute;left:1165.5px;top:1043px;" width="9" height="7" viewBox="0 0 9 7"><rect x=".6" y=".6" width="7.8" height="5.8" rx=".6" stroke="#0b1f33" stroke-width="1" fill="none"/><path d="M.8 1 L4.5 4 L8.2 1" stroke="#0b1f33" stroke-width="1" fill="none"/></svg>
<div style="position:absolute;left:1157.0px;top:1072.3px;width:7px;height:2.4px;background:#8a8a8a;border-radius:1.2px;"></div>
<svg style="position:absolute;left:1192.5px;top:1045px;" width="22" height="22" viewBox="0 0 22 22"><path d="M5 0 H20 A2 2 0 0 1 22 2 V20 A2 2 0 0 1 20 22 H7 A2 2 0 0 1 5 20 Z" fill="#c43fbb"/><path d="M14 0 H20 A2 2 0 0 1 22 2 V7 H14 Z" fill="#e06fd6"/><path d="M14 7 H22 V14 H14 Z" fill="#a92bb0"/><rect x="0" y="8" width="11.5" height="11.5" rx="1.8" fill="#7a1fa8"/></svg>
<span class="t" style="left:898.3px;width:600px;text-align:center;top:1054.5px;font-size:8.5px;line-height:9px;font-weight:700;color:#fff;"><span>N</span></span>
<div style="position:absolute;left:1201.0px;top:1072.3px;width:7px;height:2.4px;background:#8a8a8a;border-radius:1.2px;"></div>
<svg style="position:absolute;left:1238.5px;top:1045.5px;" width="21" height="21" viewBox="0 0 21 21"><rect x="0" y="0" width="21" height="21" rx="5.5" fill="#3f1790"/><rect x="2.5" y="2" width="16" height="17" rx="4" fill="#55229f"/></svg>
<span class="t" style="left:949px;width:600px;text-align:center;top:1049.5px;font-size:13px;line-height:13px;font-weight:700;color:#fff;"><span>Q</span></span>
<div style="position:absolute;left:1245.0px;top:1072.3px;width:7px;height:2.4px;background:#8a8a8a;border-radius:1.2px;"></div>
<svg style="position:absolute;left:1281px;top:1045px;" width="22" height="22" viewBox="0 0 22 22"><path d="M5 0 H20 A2 2 0 0 1 22 2 V20 A2 2 0 0 1 20 22 H7 A2 2 0 0 1 5 20 Z" fill="#1f9b55"/><path d="M13.5 0 H20 A2 2 0 0 1 22 2 V7 H13.5 Z" fill="#3fcf7c"/><path d="M5 0 H13.5 V7 H5 Z" fill="#27b562"/><path d="M13.5 7 H22 V14 H13.5 Z" fill="#12713c"/><path d="M5 14 H22 V20 A2 2 0 0 1 20 22 H7 A2 2 0 0 1 5 20 Z" fill="#0e5c31"/><rect x="0" y="8" width="11.5" height="11.5" rx="1.8" fill="#117a41"/></svg>
<span class="t" style="left:986.8px;width:600px;text-align:center;top:1054.5px;font-size:8.5px;line-height:9px;font-weight:700;color:#fff;"><span>X</span></span>
<div style="position:absolute;left:1289.0px;top:1072.3px;width:7px;height:2.4px;background:#8a8a8a;border-radius:1.2px;"></div>
<svg style="position:absolute;left:1327.5px;top:1044px;" width="18" height="24" viewBox="0 0 18 24"><rect x="0" y="0" width="18" height="24" rx="2" fill="#6f7f92"/><rect x="2" y="2" width="14" height="5" fill="#5fd3f3"/><g fill="#d7dde4"><rect x="2" y="9" width="4" height="3.4"/><rect x="7" y="9" width="4" height="3.4"/><rect x="2" y="13.6" width="4" height="3.4"/><rect x="7" y="13.6" width="4" height="3.4"/><rect x="2" y="18.2" width="4" height="3.4"/><rect x="7" y="18.2" width="4" height="3.4"/></g><rect x="12" y="9" width="4" height="3.4" fill="#d7dde4"/><rect x="12" y="13.6" width="4" height="8" fill="#2f6fbf"/></svg>
<div style="position:absolute;left:1333.0px;top:1072.3px;width:7px;height:2.4px;background:#8a8a8a;border-radius:1.2px;"></div>
<svg style="position:absolute;left:1699px;top:1052px;" width="12" height="8" viewBox="0 0 12 8"><path d="M1 6.5 L6 1.6 L11 6.5" stroke="#1f1f1f" stroke-width="1.5" fill="none"/></svg>
<svg style="position:absolute;left:1730px;top:1047px;" width="14" height="17" viewBox="0 0 14 17"><rect x="4.4" y=".8" width="5.2" height="9.6" rx="2.6" stroke="#1e5fbf" stroke-width="1.3" fill="none"/><path d="M1.4 7.5 A5.6 5.6 0 0 0 12.6 7.5" stroke="#1e5fbf" stroke-width="1.3" fill="none"/><path d="M7 13.2 V16.4" stroke="#1e5fbf" stroke-width="1.3"/></svg>
<svg style="position:absolute;left:1760px;top:1049px;" width="18" height="13" viewBox="0 0 18 13"><path d="M1.2 4.8 A11 11 0 0 1 16.8 4.8 M3.8 7.4 A7.4 7.4 0 0 1 14.2 7.4 M6.4 10 A3.7 3.7 0 0 1 11.6 10" stroke="#1f1f1f" stroke-width="1.3" fill="none"/><circle cx="9" cy="11.7" r="1.1" fill="#1f1f1f"/></svg>
<svg style="position:absolute;left:1785px;top:1049px;" width="17" height="14" viewBox="0 0 17 14"><path d="M1 5 H3.6 L7 1.6 V12.4 L3.6 9 H1 Z" stroke="#1f1f1f" stroke-width="1.1" fill="none" stroke-linejoin="round"/><path d="M9.4 4.6 A3.4 3.4 0 0 1 9.4 9.4 M11.4 2.8 A6 6 0 0 1 11.4 11.2 M13.6 1 A8.6 8.6 0 0 1 13.6 13" stroke="#1f1f1f" stroke-width="1.1" fill="none"/></svg>
<svg style="position:absolute;left:1809px;top:1048px;" width="21" height="14" viewBox="0 0 21 14"><rect x=".7" y="3" width="17.6" height="10" rx="2.8" stroke="#1f1f1f" stroke-width="1.3" fill="none"/><rect x="2.1" y="4.5" width="14.8" height="7" rx="1.5" fill="#107c10"/><path d="M19.2 6.2 V9.8" stroke="#1f1f1f" stroke-width="1.6" stroke-linecap="round"/><path d="M10.8 .2 L6.9 6.3 H9.3 L8.1 11 L12.5 4.7 H10 Z" fill="#1f1f1f" stroke="#eee" stroke-width="1.2" paint-order="stroke"/></svg>
<span class="t" style="right:19.153125000000045px;top:1040.8px;font-size:11px;line-height:15px;font-weight:400;color:#1a1a1a;letter-spacing:0.547px;"><span>11:18 AM</span></span>
<span class="t" style="right:18.8046875px;top:1056.8px;font-size:11px;line-height:15px;font-weight:400;color:#1a1a1a;letter-spacing:0.695px;"><span>3/24/2026</span></span>
</div>
</body>
</html>
